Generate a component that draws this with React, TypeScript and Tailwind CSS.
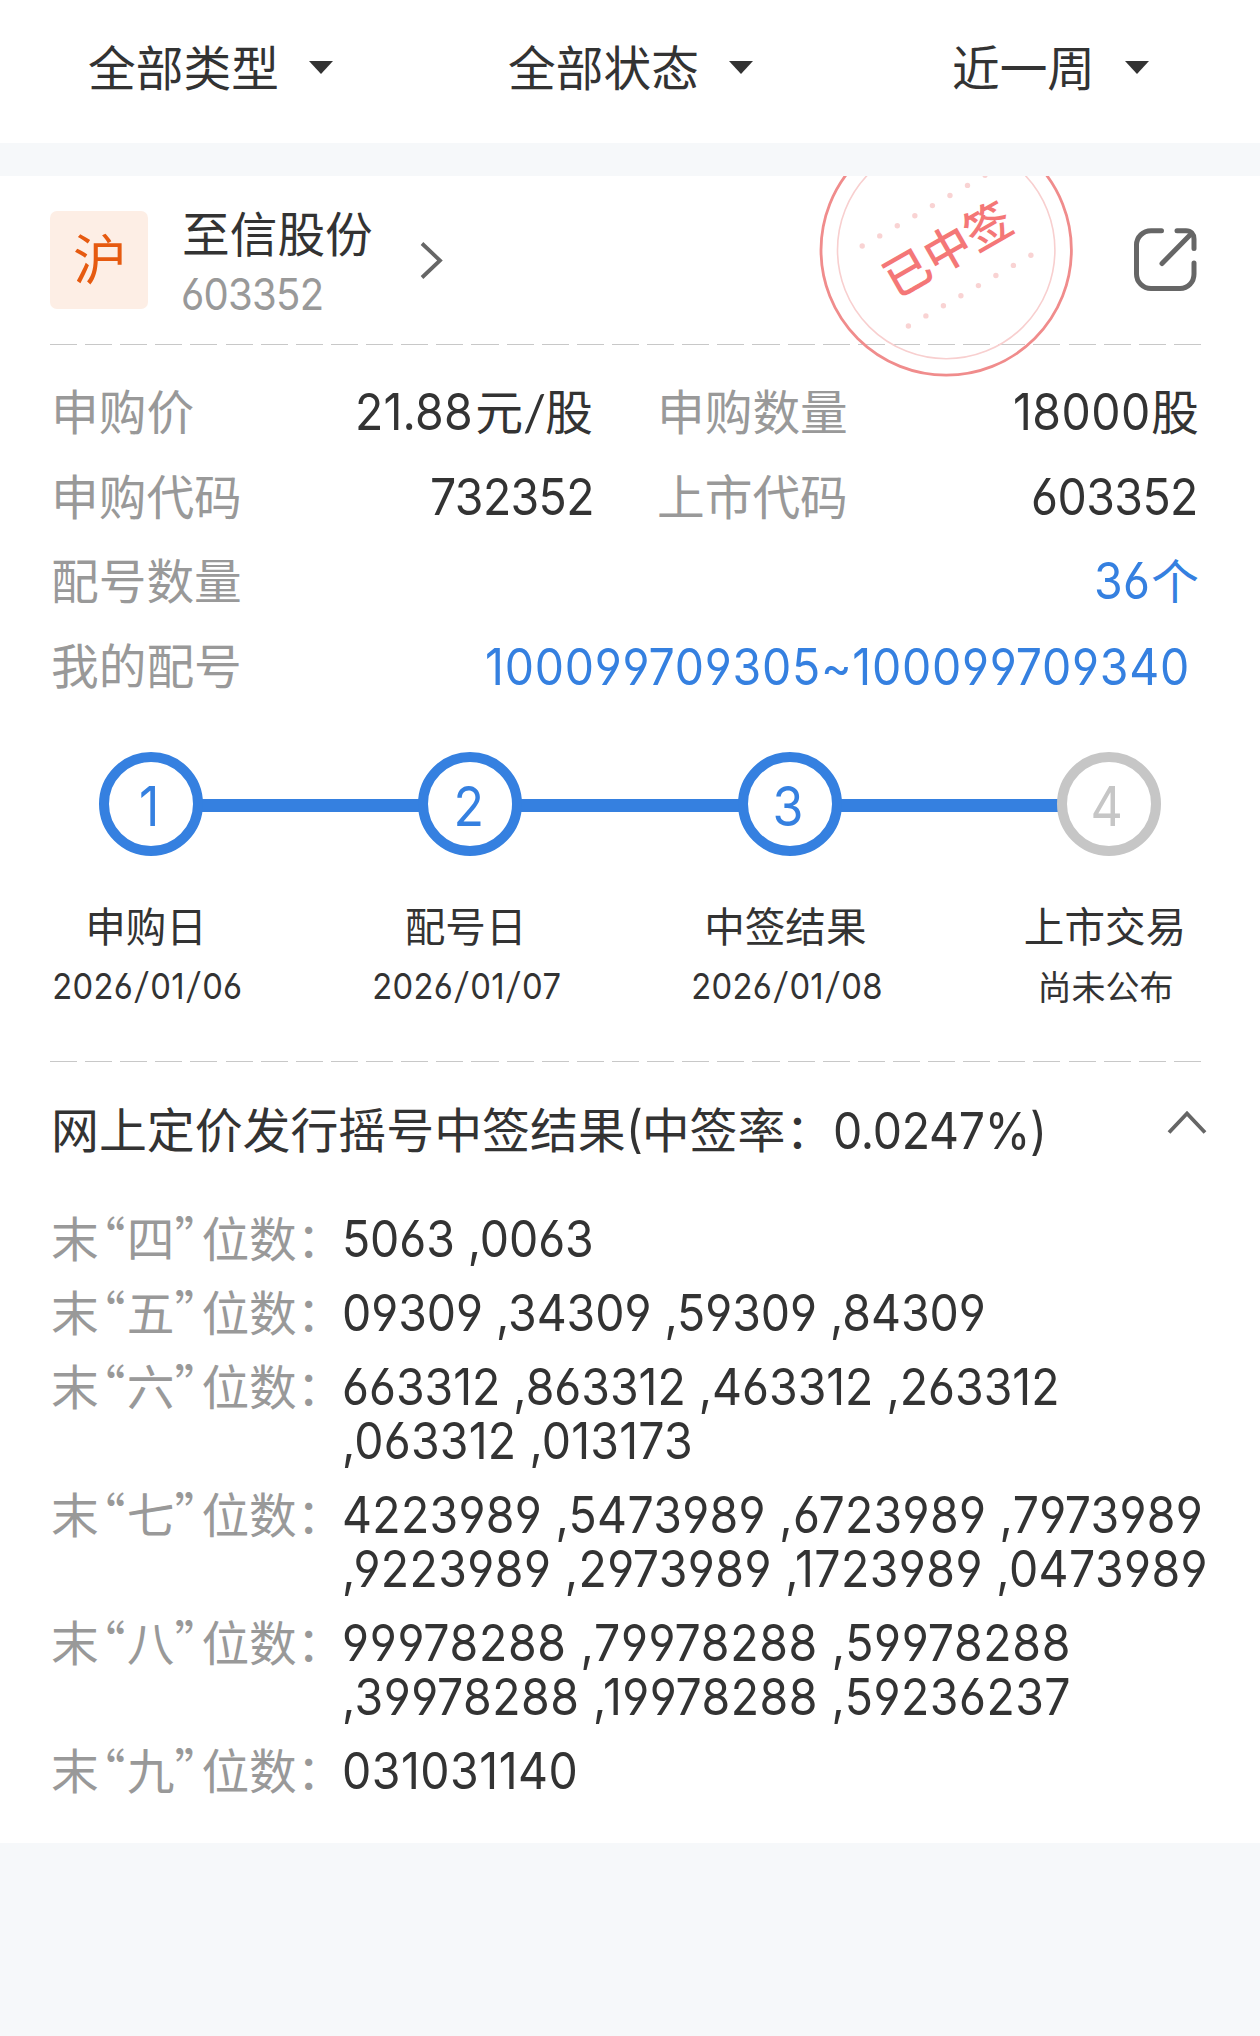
import React from "react";

const digits =
  "inline-block origin-left scale-x-[0.91] whitespace-pre font-['Inter'] [font-feature-settings:'cv03','cv04']";

type NumProps = { children: string; box?: string; className?: string };

/** Condensed figures. `box` is the room that they take in the line. */
function Num({ children, box = "", className = "text-[51px]" }: NumProps) {
  return (
    <span className={`block shrink-0 whitespace-nowrap ${box}`}>
      <span className={`${digits} ${className}`}>{children}</span>
    </span>
  );
}

function Filter({ label }: { label: string }) {
  return (
    <div className="flex items-center justify-center pb-[9px] pl-[1px]">
      <span className="pb-[2px] text-[47.7px] leading-[60px]">{label}</span>
      <svg className="ml-[30px] h-[13px] w-[24px]" viewBox="0 0 24 13">
        <path d="M0 0H24L12 13Z" fill="#333" />
      </svg>
    </div>
  );
}

function Divider() {
  return (
    <div className="h-px w-[1151px] bg-[repeating-linear-gradient(to_right,#c8c8c8_0_27px,transparent_27px_35.125px)]" />
  );
}

function Field({ label, children }: { label: string; children: React.ReactNode }) {
  return (
    <div className="flex h-[84.7px] items-center justify-between">
      <span className="pb-[5px] pl-[1px] text-[47.7px] text-[#999]">{label}</span>
      <span className="flex items-center">{children}</span>
    </div>
  );
}

function Zh({ children }: { children: string }) {
  return <span className="shrink-0 pb-[5px] text-[47.9px] whitespace-nowrap">{children}</span>;
}

const upperDots = Array.from({ length: 8 }, (_, i) => [862.2 + i * 17.55, 246 - i * 10.1]);
const lowerDots = Array.from({ length: 8 }, (_, i) => [908.4 + i * 17.5, 326 - i * 10.1]);

function Stamp() {
  return (
    <div className="absolute top-[-54px] left-[818px] h-[257px] w-[257px]">
      <svg className="h-full w-full" viewBox="818 122 257 257">
        <circle cx="946.2" cy="250" r="125.2" fill="none" stroke="#f08c8c" strokeWidth="2.8" />
        <circle cx="946.2" cy="250" r="108.7" fill="none" stroke="#f8cfcf" strokeWidth="1.6" />
        {[...upperDots, ...lowerDots].map(([x, y]) => (
          <circle key={`${x}-${y}`} cx={x} cy={y} r="2.7" fill="#f9d3d3" />
        ))}
      </svg>
      <span className="absolute inset-0 flex -rotate-[29.7deg] items-center justify-center pb-[7px] pl-[3px] text-[46.5px] font-medium text-[#f47777]">
        已中签
      </span>
    </div>
  );
}

const steps = [
  { n: "1", title: "申购日", date: "2026/01/06" },
  { n: "2", title: "配号日", date: "2026/01/07" },
  { n: "3", title: "中签结果", date: "2026/01/08" },
  { n: "4", title: "上市交易", date: "尚未公布" },
];

const results = [
  { d: "四", lines: [["5063 ,0063", "tracking-[-0.1px]"]] },
  { d: "五", lines: [["09309 ,34309 ,59309 ,84309", "tracking-[-0.05px]"]] },
  { d: "六", lines: [["663312 ,863312 ,463312 ,263312", "tracking-[-0.03px]"], [",063312 ,013173", "tracking-[0.2px]"]] },
  {
    d: "七",
    lines: [
      ["4223989 ,5473989 ,6723989 ,7973989", "tracking-[0.35px]"],
      [",9223989 ,2973989 ,1723989 ,0473989", "tracking-[0.46px]"],
    ],
  },
  {
    d: "八",
    lines: [
      ["99978288 ,79978288 ,59978288", "tracking-[0.77px]"],
      [",39978288 ,19978288 ,59236237", "tracking-[0.55px]"],
    ],
  },
  { d: "九", lines: [["031031140", "tracking-[0.55px]"]] },
];

export default function App() {
  return (
    <div className="h-[2036px] w-[1260px] overflow-hidden bg-[#f6f8fa] font-['Noto_Sans_CJK_SC',sans-serif] text-[#333]">
      <header className="grid h-[143px] grid-cols-3 bg-white">
        <Filter label="全部类型" />
        <Filter label="全部状态" />
        <Filter label="近一周" />
      </header>

      <main className="relative mt-[33px] h-[1667px] overflow-hidden bg-white pl-[50px]">
        <div className="flex h-[168px] items-start pt-[35px]">
          <div className="flex h-[98px] w-[98px] items-center justify-center rounded-[7px] bg-[#fdeee5] pb-[7px] pl-[2px] text-[54px] leading-none text-[#e65a10]">
            沪
          </div>
          <div className="ml-[34px] w-[192px]">
            <div className="-mt-[3px] text-[47.7px] leading-[48px]">至信股份</div>
            <Num className="text-[44px] leading-[44px] text-[#999] tracking-[-0.8px]" box="mt-[16px] -ml-[1px] h-[44px]">
              603352
            </Num>
          </div>
          <svg className="mt-[31px] ml-[46px] h-[37px] w-[24px]" viewBox="0 0 24 37" fill="none">
            <path d="M2 1.5L20 18.5L2 35.5" stroke="#666" strokeWidth="3.8" />
          </svg>
          <svg
            className="mt-[17px] ml-[690px] h-[64px] w-[64px] shrink-0"
            viewBox="0 0 64 64"
            fill="none"
            stroke="#666"
            strokeWidth="5"
            strokeLinecap="round"
            strokeLinejoin="round"
          >
            <path d="M27.5 2.7H17C9 2.7 2.5 9 2.5 17V46C2.5 54 9 60.5 17 60.5H46C54 60.5 60 54 60 46V35" />
            <path d="M43 2.7H52C57 2.7 60 6 60 11V20.5" />
            <path d="M57 6L28 35.5" />
          </svg>
        </div>
        <Divider />

        <div className="mt-[25px] w-[1149px]">
          <div className="grid grid-cols-2 gap-x-[63px]">
            <Field label="申购价">
              <Num box="w-[120px]" className="text-[51px] tracking-[0.2px]">21.88</Num>
              <Zh>元</Zh>
              <span className="w-[22px] font-['Lato'] text-[51px]">/</span>
              <Zh>股</Zh>
            </Field>
            <Field label="申购数量">
              <Num box="w-[138px]" className="text-[51px] tracking-[0.5px]">18000</Num>
              <Zh>股</Zh>
            </Field>
            <Field label="申购代码">
              <Num box="w-[163px]" className="text-[51px] tracking-[-0.7px]">732352</Num>
            </Field>
            <Field label="上市代码">
              <Num box="w-[168px]" className="text-[51px] tracking-[-0.6px]">603352</Num>
            </Field>
          </div>
          <Field label="配号数量">
            <span className="flex items-center text-[#3580e0]">
              <Num box="w-[57px]" className="text-[51px] tracking-[0.5px]">36</Num>
              <Zh>个</Zh>
            </span>
          </Field>
          <Field label="我的配号">
            <Num box="w-[714px] mt-[2px] text-[#3580e0]" className="text-[51px] tracking-[0.83px]">
              100099709305~100099709340
            </Num>
          </Field>
        </div>

        <div className="mt-[43px] ml-[49px] flex w-[1062px] items-center">
          {steps.map((s, i) => (
            <React.Fragment key={s.n}>
              {i > 0 && <div className="-mx-[4px] mt-[3px] h-[13px] flex-1 bg-[#3580e0]" />}
              <div
                className={`relative flex h-[104px] w-[104px] shrink-0 items-center justify-center rounded-full border-[10px] bg-white pt-[6px] pr-[4px] font-['Inter'] text-[55px] leading-none ${
                  i < 3 ? "border-[#3580e0] text-[#3580e0]" : "border-[#c6c6c6] text-[#c6c6c6]"
                }`}
              >
                <span className="scale-x-[0.91]">{s.n}</span>
              </div>
            </React.Fragment>
          ))}
        </div>

        <div className="mt-[39px] -ml-[4px] flex w-[1159px] justify-between">
          {steps.map((s, i) => (
            <div key={s.n} className="flex w-[200px] flex-col items-center whitespace-nowrap">
              <span className="text-[40.6px] leading-[60px]">{s.title}</span>
              {i < 3 ? (
                <span className="mt-[2px] flex scale-x-[0.91] pl-[3px] font-['Inter'] text-[36px] leading-[59px] tracking-[0.3px] [font-feature-settings:'cv03','cv04']">
                  {s.date.split("/").map((part, k) => (
                    <React.Fragment key={k}>
                      {k > 0 && <span className="w-[19px] text-center font-['Lato'] text-[40px]">/</span>}
                      <span>{part}</span>
                    </React.Fragment>
                  ))}
                </span>
              ) : (
                <span className="mt-[2px] pl-[1px] text-[34px] leading-[58px]">{s.date}</span>
              )}
            </div>
          ))}
        </div>

        <div className="h-[45px]" />
        <Divider />

        <div className="mt-[29px] flex h-[80px] items-center">
          <span className="flex w-[1000px] shrink-0 items-center pl-[1px]">
            <Zh>网上定价发行摇号中签结果</Zh>
            <Num box="w-[16px] pb-[3px]">(</Num>
            <Zh>中签率：</Zh>
            <Num box="w-[217px]" className="text-[51px] tracking-[-0.3px]">0.0247%)</Num>
          </span>
          <svg className="-mt-[18px] ml-[117px] h-[24px] w-[40px]" viewBox="0 0 40 24" fill="none">
            <path d="M2 22.5L20 3.5L38 22.5" stroke="#666" strokeWidth="3.8" />
          </svg>
        </div>

        <div className="mt-[41px] flex flex-col gap-[19.5px] leading-[54.4px]">
          {results.map((r) => (
            <div key={r.d} className="flex items-start">
              <div className="-mt-[2px] flex w-[295px] shrink-0 pl-[1px] text-[47.7px] whitespace-nowrap text-[#999]">
                <span>末</span>
                <span className="w-[28px] pl-[3px] [font-feature-settings:'halt']">“</span>
                <span>{r.d}</span>
                <span className="w-[27px] [font-feature-settings:'halt']">”</span>
                <span>位数：</span>
              </div>
              <div className="-ml-[3px]">
                {r.lines.map(([text, tracking]) => (
                  <Num key={text} box="h-[54.4px]" className={`text-[51px] leading-[54.4px] ${tracking}`}>
                    {text}
                  </Num>
                ))}
              </div>
            </div>
          ))}
        </div>
        <Stamp />
      </main>
    </div>
  );
}
